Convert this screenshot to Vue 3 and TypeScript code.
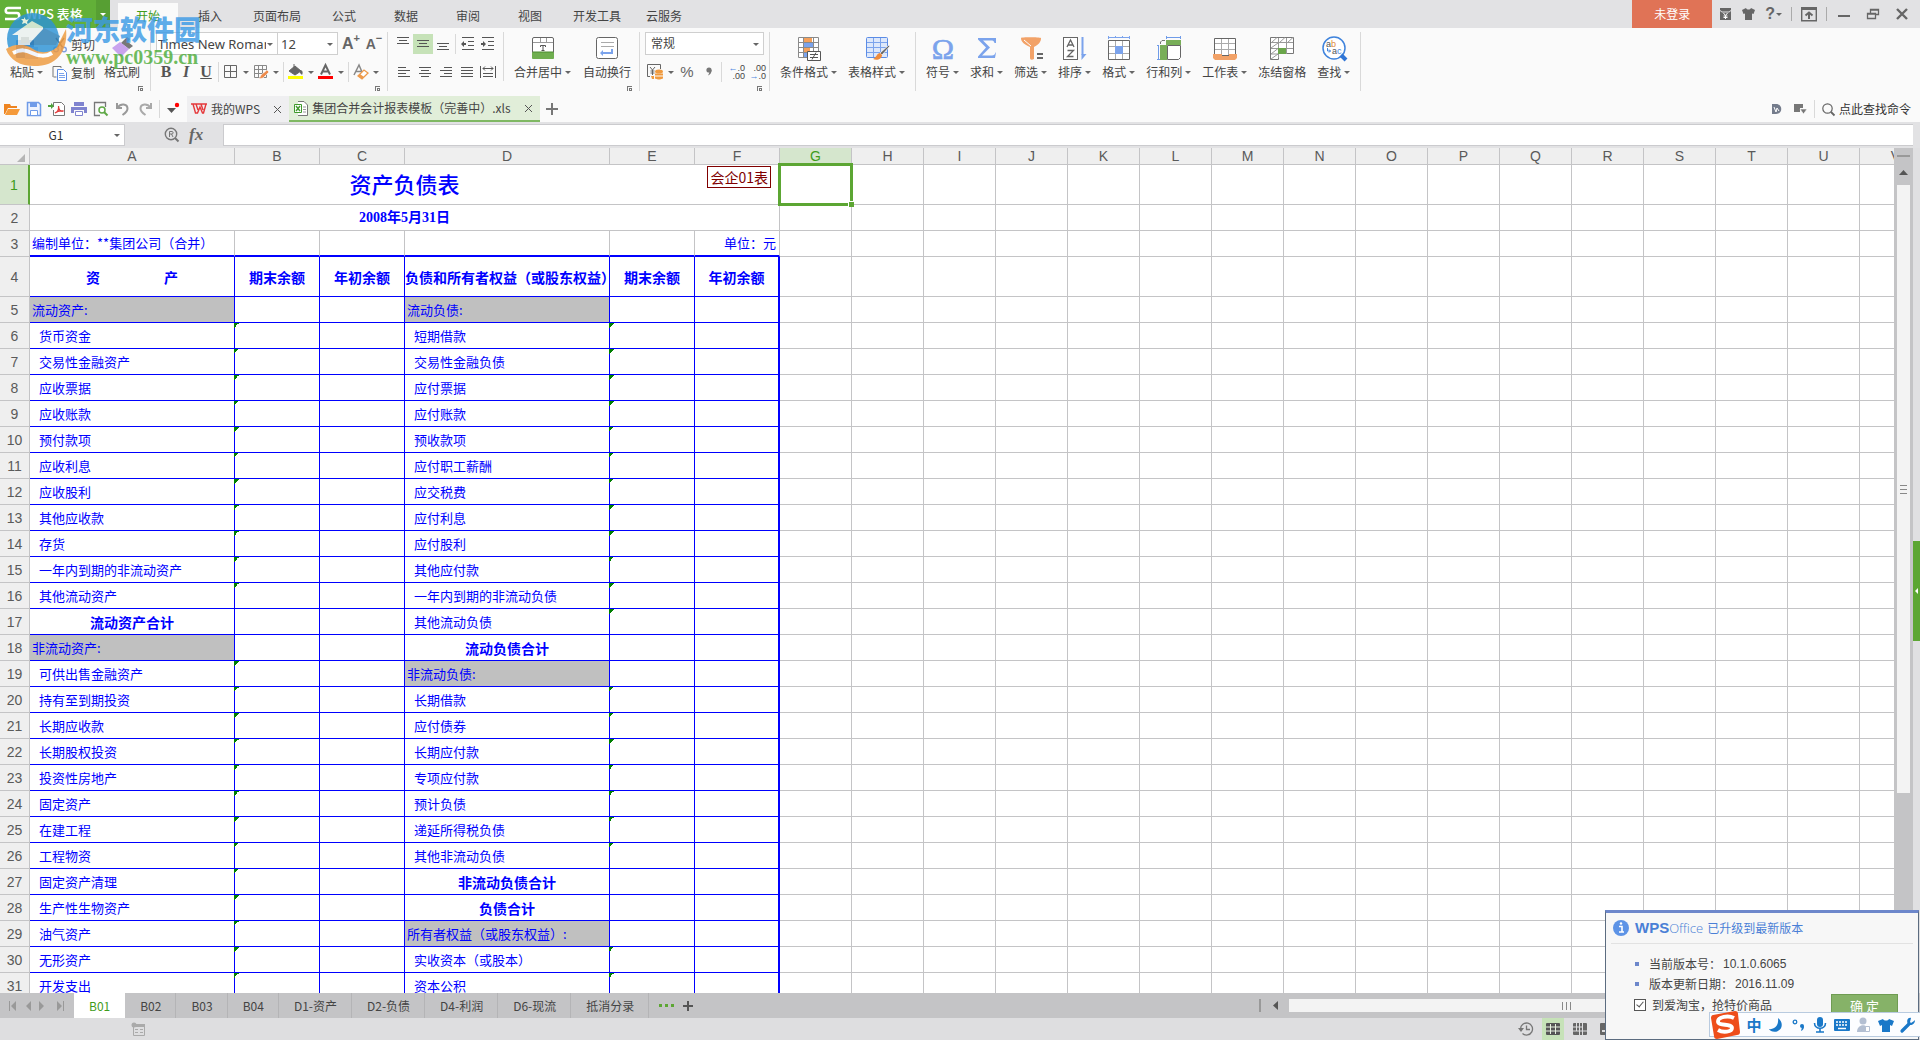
<script setup lang="ts">
import { ref } from 'vue'

interface BigTool { label: string; icon: string; caret: boolean }
interface Row { n: number; a: string; d: string; aKind: string; dKind: string; flagB: boolean; flagE: boolean }

const menus: string[] = ['插入', '页面布局', '公式', '数据', '审阅', '视图', '开发工具', '云服务']
const fontName = ref('Times New Roman')
const fontSize = ref('12')
const numberFormat = ref('常规')
const cellName = ref('G1')
const formula = ref('')
const openTaobao = ref(true)

const art: Record<string, string> = {
  merge: '<rect x="1.5" y="1.5" width="21" height="21" rx="1.5" fill="#fff" stroke="#666"/><path d="M2 6.500h20M9.500 2v4M15.500 2v4" stroke="#999"/><rect x="1" y="16" width="22" height="7" rx="1" fill="#6fae4f"/><path d="M2 16h20" stroke="#4c8c30"/><path d="M9.500 11V9.500h5V11M12 9.500v5M10.500 14.500h3" stroke="#555" fill="none"/>',
  wrap: '<rect x="1.500" y="1.500" width="21" height="21" rx="2" fill="#fff" stroke="#666"/><path d="M6 6.500h13M6 10.500h13" stroke="#aaa"/><path d="M16 13h2v5H8v2l-3-3 3-3v2h8z" fill="#7ba3ec"/>',
  cond: '<path d="M1.500 1.500h20v20h-20zM6.500 1.500v20M16.500 1.500v20M1.500 6.500h20M1.500 11.500h20M1.500 16.500h20" fill="#fff" stroke="#8a8a8a"/><path d="M7 2h8v4H7zM7 12h6v4H7z" fill="#f5a05a"/><path d="M7 7h9v4H7zM7 17h3v4H7z" fill="#7ba3ec"/><path d="M10.500 15.500h13v9h-13z" fill="#fff" stroke="#555"/><path d="M13 18.500h8M13 21.500h8M19 16.500l-4 7" stroke="#555"/>',
  style: '<rect x="1.500" y="1.500" width="21" height="20" rx="1" fill="#dde8fb" stroke="#5b8ce6"/><path d="M2 6.500h20M2 11.500h20M2 16.500h20M8.500 2v19M15.500 2v19" stroke="#7ba3ec"/><path d="M24 9l-9 8 2 2 8-9z" fill="#666" stroke="#fff" stroke-width=".7"/><path d="M15 17c-3 0-3 4-7 6 4 2 9 0 9-4z" fill="#ef8b3a"/>',
  omega: '<text x="12" y="23" text-anchor="middle" font-family="Liberation Serif" font-size="30" fill="#7ba3ec" stroke="#7ba3ec" stroke-width=".6">Ω</text>',
  sigma: '<path d="M3 2h18v5h-1.500c-.5-2-1.500-2.500-3.500-2.500H8l7 7-8 8h10c2 0 3-1 3.500-3H21l-1 5.500H3v-1.500l8-9-8-8z" fill="#7ba3ec"/>',
  filter: '<path d="M2 2c0-1 18-1 20 0 0 4-2 6-7 9v12c-2 1-4 1-4-1V11C5 8 2 6 2 2z" fill="#f2a268"/><path d="M5 4l7 6" stroke="#fff"/><path d="M18 18h6M18 22h6" stroke="#666" stroke-width="2"/>',
  sort: '<rect x=".5" y="1.500" width="14" height="22" fill="#fff" stroke="#666"/><path d="M4 11l3.500-7 3.500 7M5 9h5M4.500 14.500h6l-6 6h6" fill="none" stroke="#666" stroke-width="1.300"/><path d="M18.500 1v17h5l-5 6z" fill="#7ba3ec"/><path d="M19.500 1v18" stroke="#7ba3ec" stroke-width="2"/>',
  format: '<path d="M1.500 0v3M1.500 1.500h21M22.500 0v3M8.500 0v2M15.500 0v2" stroke="#7ba3ec"/><path d="M1.500 4.500h21v19h-21z" fill="#fff" stroke="#666"/><path d="M8.500 5v18M15.500 5v18M2 10.500h20M2 17.500h20" stroke="#aaa"/><path d="M8 10h8v8H8z" fill="#7ba3ec"/>',
  rowcol: '<path d="M9.500 0v3M9.500 1.500h14M23.500 0v3M0 9.500h2M1.500 9.500v14M0 23.500h3" stroke="#6f9be8"/><path d="M9 4h15v5H9zM3 9h7v15H3z" fill="#78ae58"/><path d="M3.500 8V6L5 4.500h3" stroke="#777" fill="none"/><path d="M10.500 9.500h13v12l-2 2h-11z" fill="#fff" stroke="#666"/>',
  sheet: '<path d="M1.500 2.500h21v17h-21z" fill="#fff" stroke="#666"/><path d="M8.500 3v16M15.500 3v16M2 7.500h20M2 13.500h20" stroke="#aaa"/><path d="M0 18h9v2h7v-2h8v4l-2 2H2l-2-2z" fill="#f2a268"/>',
  freeze: '<path d="M.5 1.500h23v16h-15v6h-8z" fill="#fff" stroke="#777"/><path d="M1 6.500h22M1 12.500h22M1 18h8M8.500 2v20M16.500 2v16M1 7l6-5.500M9 7l6-5.500M17 7l6-5.500M1 12l7-5M1 18l7-5.500M1 23l7-5" stroke="#999"/><path d="M8 12h8v6H8z" fill="#6aa64a"/>',
  find: '<circle cx="12" cy="12" r="11" fill="#fff" stroke="#3f83dc" stroke-width="1.500"/><path d="M19 19l5 5" stroke="#2f75d6" stroke-width="4"/><text x="4" y="11" font-family="Liberation Sans" font-size="9" fill="#555">a<tspan fill="#e08a3c">b</tspan></text><text x="10" y="18" font-family="Liberation Sans" font-size="9" fill="#555">a<tspan fill="#3f83dc">c</tspan></text><path d="M5.500 12v3h3M7 13.500l1.500 1.500L7 16.500" stroke="#3f83dc" fill="none"/>',
}

const styleTools: BigTool[] = [
  { label: '条件格式', icon: 'cond', caret: true },
  { label: '表格样式', icon: 'style', caret: true },
]
const mergeTools: BigTool[] = [
  { label: '合并居中', icon: 'merge', caret: true },
  { label: '自动换行', icon: 'wrap', caret: false },
]
const editTools: BigTool[] = [
  { label: '符号', icon: 'omega', caret: true },
  { label: '求和', icon: 'sigma', caret: true },
  { label: '筛选', icon: 'filter', caret: true },
  { label: '排序', icon: 'sort', caret: true },
  { label: '格式', icon: 'format', caret: true },
  { label: '行和列', icon: 'rowcol', caret: true },
  { label: '工作表', icon: 'sheet', caret: true },
  { label: '冻结窗格', icon: 'freeze', caret: false },
  { label: '查找', icon: 'find', caret: true },
]

const alignTop: { name: string; d: string; on?: boolean }[] = [
  { name: '顶端对齐', d: 'M2 1.500h12M4 4.500h8M2 7.500h12' },
  { name: '垂直居中', d: 'M2 4.500h12M4 7.500h8M2 10.500h12', on: true },
  { name: '底端对齐', d: 'M2 7.500h12M4 10.500h8M2 13.500h12' },
]
const indents: { name: string; d: string; arrow: string }[] = [
  { name: '减少缩进量', d: 'M2 1.500h12M8 5.500h6M8 9.500h6M2 13.500h12', arrow: 'M1 8l3-3v2h2v2H4v2z' },
  { name: '增加缩进量', d: 'M2 1.500h12M8 5.500h6M8 9.500h6M2 13.500h12', arrow: 'M6 8L3 5v2H1v2h2v2z' },
]
const alignBottom: { name: string; d: string }[] = [
  { name: '左对齐', d: 'M2 3.500h8M2 6.500h12M2 9.500h8M2 12.500h12' },
  { name: '水平居中', d: 'M2 3.500h12M4 6.500h8M2 9.500h12M4 12.500h8' },
  { name: '右对齐', d: 'M6 3.500h8M2 6.500h12M6 9.500h8M2 12.500h12' },
  { name: '两端对齐', d: 'M2 3.500h12M2 6.500h12M2 9.500h12M2 12.500h12' },
  { name: '分散对齐', d: 'M.5 2v12M15.500 2v12M3 9.500h10M3 12.500h10M3 4.500h10M5 2.500l-2 2 2 2M11 2.500l2 2-2 2' },
]

const blankCols: string[] = 'HIJKLMNOPQRSTUV'.split('')
const assets: string[] = [
  '流动资产:', '货币资金', '交易性金融资产', '应收票据', '应收账款', '预付款项', '应收利息', '应收股利', '其他应收款', '存货',
  '一年内到期的非流动资产', '其他流动资产', '流动资产合计', '非流动资产:', '可供出售金融资产', '持有至到期投资', '长期应收款',
  '长期股权投资', '投资性房地产', '固定资产', '在建工程', '工程物资', '固定资产清理', '生产性生物资产', '油气资产', '无形资产', '开发支出',
]
const debts: string[] = [
  '流动负债:', '短期借款', '交易性金融负债', '应付票据', '应付账款', '预收款项', '应付职工薪酬', '应交税费', '应付利息', '应付股利',
  '其他应付款', '一年内到期的非流动负债', '其他流动负债', '流动负债合计', '非流动负债:', '长期借款', '应付债券', '长期应付款',
  '专项应付款', '预计负债', '递延所得税负债', '其他非流动负债', '非流动负债合计', '负债合计', '所有者权益（或股东权益）:', '实收资本（或股本）', '资本公积',
]
function kind(text: string): string {
  if (text.endsWith(':')) return 'section'
  return text.endsWith('合计') ? 'total' : 'item'
}
const rows: Row[] = assets.map((a, i) => ({
  n: i + 5,
  a,
  d: debts[i],
  aKind: kind(a),
  dKind: kind(debts[i]),
  flagB: kind(a) === 'item',
  flagE: kind(debts[i]) === 'item',
}))

const sheets: string[] = ['B01', 'B02', 'B03', 'B04', 'D1-资产', 'D2-负债', 'D4-利润', 'D6-现流', '抵消分录']
</script>

<template>
  <div class="app">
    <header class="titlebar">
      <button class="brand" type="button">
        <svg width="18" height="16" viewBox="0 0 18 16"><path d="M17 2H4C1 2 1 7 4 7h9c3 0 3 6 0 6H1" fill="none" stroke="#fff" stroke-width="2.600" /></svg>
        <span>WPS 表格</span>
        <i class="caret light"></i>
      </button>
      <nav class="menus">
        <button class="menu active" type="button">开始</button>
        <button v-for="m in menus" :key="m" class="menu" type="button">{{ m }}</button>
      </nav>
      <button class="login" type="button">未登录</button>
      <div class="window-tools">
        <button type="button" aria-label="红包"><svg width="14" height="14" viewBox="0 0 14 14"><path d="M1 1h11v2l-2 1.500H3L1 3zM1 4l2 1.500h7L12 4v9H1z" fill="#666" /><path d="M4.500 6l2 2.500L8.500 6M6.500 8.500V12M4.500 9h4M4.500 10.500h4" stroke="#fff" fill="none" /></svg></button>
        <button type="button" aria-label="皮肤"><svg width="14" height="14" viewBox="0 0 14 14"><path d="M4 1c1 2 4 2 5 0l4 2-1.500 4L10 6.500V13H3V6.500L1.500 7 0 3z" fill="#666" /></svg></button>
        <button class="help" type="button" aria-label="帮助"><b>?</b><i class="caret"></i></button>
        <span class="bar"></span>
        <button class="wide" type="button" aria-label="隐藏功能区"><svg width="16" height="16" viewBox="0 0 16 16"><path d="M.7 1.700h14.600v13H.7z" fill="none" stroke="#666" stroke-width="1.400" /><path d="M0 1h16v3H0z" fill="#666" /><path d="M8 13V7M4.500 9.500L8 6.500l3.500 3" fill="none" stroke="#666" stroke-width="2" /></svg></button>
        <span class="bar"></span>
        <button class="wide" type="button" aria-label="最小化"><svg width="14" height="14" viewBox="0 0 14 14"><path d="M1 9h12" stroke="#666" stroke-width="2" /></svg></button>
        <button class="wide" type="button" aria-label="还原"><svg width="14" height="14" viewBox="0 0 14 14"><path d="M1.500 6.500h8v5h-8zM4.500 6V2.500h8v5H10M1.500 7h8M4.500 3h8" fill="none" stroke="#666" stroke-width="1.300" /></svg></button>
        <button class="wide" type="button" aria-label="关闭"><svg width="14" height="14" viewBox="0 0 14 14"><path d="M2 2l10 10M12 2L2 12" stroke="#666" stroke-width="2.400" /></svg></button>
      </div>
    </header>

    <section class="ribbon">
      <div class="group clipboard">
        <button class="big" type="button">
          <svg width="26" height="24" viewBox="0 0 26 24"><rect x="2" y="4" width="18" height="18" rx="1" fill="#6b8ecb" /><path d="M7 1h8v6H7z" fill="#888" /><path d="M11 11h13v12H11z" fill="#b8c6ea" /></svg>
          <span class="label">粘贴<i class="caret"></i></span>
        </button>
        <div class="stack">
          <button class="small" type="button"><svg width="16" height="16" viewBox="0 0 16 16"><path d="M4 1l7 10M12 1L5 11" stroke="#777" stroke-width="1.500" /><circle cx="4" cy="12.500" r="2.300" fill="none" stroke="#7f9fdf" stroke-width="1.400" /><circle cx="12" cy="12.500" r="2.300" fill="none" stroke="#7f9fdf" stroke-width="1.400" /></svg>剪切</button>
          <button class="small" type="button"><svg width="16" height="16" viewBox="0 0 16 16"><path d="M1 12V1.500h8V3M1.500 12h3" fill="none" stroke="#777" /><path d="M5.500 4.500h6l3 3v8h-9z" fill="#fff" stroke="#5b8ce6" /><path d="M7 8.500h5M7 10.500h6M7 12.500h6" stroke="#7ba3ec" /></svg>复制</button>
        </div>
        <button class="big" type="button">
          <svg width="24" height="24" viewBox="0 0 24 24"><path d="M17 1l-6 6 8 6 4-3-5-4 2-3z" fill="#777" /><path d="M10 6L2 12l9 9 8-8z" fill="#c9a3ee" /></svg>
          <span class="label">格式刷</span>
        </button>
        <i class="launcher"></i>
      </div>

      <div class="group font">
        <div class="line pickers">
          <label class="pick family"><select v-model="fontName" aria-label="字体"><option>Times New Roman</option></select><i class="caret"></i></label>
          <label class="pick size"><select v-model="fontSize" aria-label="字号"><option>12</option></select><i class="caret"></i></label>
          <button class="grow" type="button" aria-label="增大字号">A<sup>+</sup></button>
          <button class="grow minor" type="button" aria-label="减小字号">A<sup>−</sup></button>
        </div>
        <div class="line">
          <button class="tool bold" type="button">B</button>
          <button class="tool italic" type="button">I</button>
          <button class="tool under" type="button">U</button>
          <span class="split"></span>
          <button class="tool drop" type="button" aria-label="边框"><svg width="16" height="16" viewBox="0 0 16 16"><path d="M1.500 1.500h12v12h-12zM7.500 2v11M2 7.500h11" fill="none" stroke="#666" /></svg><i class="caret"></i></button>
          <button class="tool drop" type="button" aria-label="绘制边框"><svg width="16" height="16" viewBox="0 0 16 16"><path d="M1.500 1.500h12v12h-12zM5.500 2v11M9.500 2v11M2 5.500h11M2 9.500h11" fill="none" stroke="#888" /><path d="M6 15l2-4 6-5 2 2-6 6z" fill="#ee8a4a" stroke="#fff" stroke-width=".6" /></svg><i class="caret"></i></button>
          <span class="split"></span>
          <button class="tool drop" type="button" aria-label="填充颜色"><svg width="16" height="16" viewBox="0 0 16 16"><path d="M1 7l6-5 6 5-6 4zM6 0v4" fill="#666" stroke="#666" /><path d="M12 6c3 0 3 3 2 5l-2-2z" fill="#666" /><path d="M0 12h15v3H0z" fill="#ff0" /></svg><i class="caret"></i></button>
          <button class="tool drop" type="button" aria-label="字体颜色"><svg width="16" height="16" viewBox="0 0 16 16"><path d="M3 10.500L7.500 1 12 10.500M4.500 7.500h6" fill="none" stroke="#666" stroke-width="2" /><path d="M0 12h15v3H0z" fill="red" /></svg><i class="caret"></i></button>
          <span class="split"></span>
          <button class="tool drop" type="button" aria-label="清除"><svg width="16" height="16" viewBox="0 0 16 16"><path d="M1 11L6 1l3 7M3 7.500h5" fill="none" stroke="#888" stroke-width="1.500" /><path d="M5 12l6-6 4 3-6 6z" fill="#fff" stroke="#ee9a4a" stroke-width="1.300" /><path d="M5 12l2-2 4 3-2 2z" fill="#ee9a4a" /></svg><i class="caret"></i></button>
        </div>
        <i class="launcher"></i>
      </div>

      <div class="group align">
        <div class="line first">
          <button v-for="a in alignTop" :key="a.name" class="tool" :class="{ on: a.on }" type="button" :aria-label="a.name"><svg width="16" height="16" viewBox="0 0 16 16"><path :d="a.d" stroke="#555" /></svg></button>
          <span class="split"></span>
          <button v-for="a in indents" :key="a.name" class="tool" type="button" :aria-label="a.name"><svg width="16" height="16" viewBox="0 0 16 16"><path :d="a.d" stroke="#555" /><path :d="a.arrow" fill="#555" /></svg></button>
        </div>
        <div class="line">
          <button v-for="a in alignBottom" :key="a.name" class="tool mid" type="button" :aria-label="a.name"><svg width="16" height="16" viewBox="0 0 16 16"><path :d="a.d" fill="none" stroke="#555" /></svg></button>
        </div>
      </div>

      <div class="group bigs merge">
        <button v-for="t in mergeTools" :key="t.label" class="big" type="button">
          <svg width="24" height="24" viewBox="0 0 24 24" v-html="art[t.icon]"></svg>
          <span class="label">{{ t.label }}<i v-if="t.caret" class="caret"></i></span>
        </button>
        <i class="launcher"></i>
      </div>

      <div class="group number">
        <div class="line pickers">
          <label class="pick format"><select v-model="numberFormat" aria-label="数字格式"><option>常规</option></select><i class="caret"></i></label>
        </div>
        <div class="line">
          <button class="tool drop" type="button" aria-label="货币"><svg width="18" height="16" viewBox="0 0 18 16"><path d="M4 12.500H1.500v-12h13V5" fill="none" stroke="#666" /><path d="M4 3l2.500 3L9 3M6.500 6v5M4.500 7h4M4.500 9h4" fill="none" stroke="#666" /><ellipse cx="13" cy="7.500" rx="4" ry="2" fill="#f09a3e" /><path d="M9 9.500h8v2H9zM9 12.500h8v2l-3 1h-2l-3-1zM5 12h3v3H6z" fill="#f09a3e" /></svg><i class="caret"></i></button>
          <button class="tool percent" type="button">%</button>
          <button class="tool" type="button" aria-label="千位分隔"><svg width="8" height="12" viewBox="0 0 8 12"><circle cx="4" cy="4" r="2.600" fill="#777" /><path d="M6.600 4c0 3-1.600 5-3.600 5.500 1-1.500 1.500-3 1.400-5z" fill="#777" /></svg></button>
          <span class="split"></span>
          <button class="tool decimals mid" type="button" aria-label="增加小数位"><span><b>←</b>.0</span><span>.00</span></button>
          <button class="tool decimals mid" type="button" aria-label="减少小数位"><span>.00</span><span><b>→</b>.0</span></button>
        </div>
        <i class="launcher"></i>
      </div>

      <div class="group bigs">
        <button v-for="t in styleTools" :key="t.label" class="big" type="button">
          <svg width="24" height="24" viewBox="0 0 24 24" v-html="art[t.icon]"></svg>
          <span class="label">{{ t.label }}<i v-if="t.caret" class="caret"></i></span>
        </button>
      </div>
      <div class="group bigs">
        <button v-for="t in editTools" :key="t.label" class="big" type="button">
          <svg width="24" height="24" viewBox="0 0 24 24" v-html="art[t.icon]"></svg>
          <span class="label">{{ t.label }}<i v-if="t.caret" class="caret"></i></span>
        </button>
      </div>
    </section>

    <section class="quick">
      <div class="quick-icons">
        <button type="button" aria-label="打开"><svg width="16" height="16" viewBox="0 0 16 16"><path d="M0 3h6l1 2h6v2H4l-3 6H0z" fill="#ee8420" /><path d="M4 8h12l-3 6H1z" fill="#f59a3a" /></svg></button>
        <button type="button" aria-label="保存"><svg width="16" height="16" viewBox="0 0 16 16"><path d="M1.500 1.500h11l2 2v11h-13z" fill="#eef3fe" stroke="#6f9be8" stroke-width="1.500" /><path d="M4 2h7v4H4z" fill="#6f9be8" /><path d="M4.500 9.500h7v5h-7z" fill="#fff" stroke="#6f9be8" /></svg></button>
        <button type="button" aria-label="输出为PDF"><svg width="17" height="16" viewBox="0 0 17 16"><path d="M5.500 6V1.500h8l3 3v10h-11V9" fill="#fff" stroke="#777" /><path d="M0 4h3V2l3 3-3 3V6H0z" fill="#4fa23c" /><path d="M7 12c3-1 4-4 3.500-7 0 4 2 6 5 5-3-.5-6 0-8.500 2z" fill="none" stroke="#e23b3b" stroke-width="1.300" /></svg></button>
        <button type="button" aria-label="打印"><svg width="16" height="16" viewBox="0 0 16 16"><path d="M3 1h10v4H3zM0 6h16v6h-3V9H3v3H0z" fill="#7f83cf" /><path d="M4.500 10.500h7v4h-7z" fill="#fff" stroke="#7f83cf" /></svg></button>
        <button type="button" aria-label="打印预览"><svg width="16" height="16" viewBox="0 0 16 16"><path d="M12.500 6V1.500h-11v13H7" fill="none" stroke="#777" stroke-width="1.300" /><circle cx="9" cy="9" r="3" fill="#fff" stroke="#5fa846" stroke-width="1.500" /><path d="M11 11l3.500 3.500" stroke="#5fa846" stroke-width="2" /></svg></button>
        <button type="button" aria-label="撤销"><svg width="16" height="16" viewBox="0 0 16 16"><path d="M2 2v5h5M2.500 6.500C6 2 12 3 12.500 7c.3 3-2 5-5 7" fill="none" stroke="#999" stroke-width="2" /></svg></button>
        <button type="button" aria-label="恢复"><svg width="16" height="16" viewBox="0 0 16 16"><path d="M14 2v5H9M13.500 6.500C10 2 4 3 3.500 7c-.3 3 2 5 5 7" fill="none" stroke="#aaa" stroke-width="2" /></svg></button>
        <span class="split tall"></span>
        <button class="more" type="button" aria-label="更多"><svg width="14" height="16" viewBox="0 0 14 16"><path d="M1 7h9l-4.500 5z" fill="#555" /><circle cx="11" cy="4" r="2.200" fill="#f00" /></svg></button>
      </div>
      <div class="doc-tabs">
        <div class="doc">
          <svg width="16" height="14" viewBox="0 0 16 14"><path d="M0 2h9M7 2h9M2 2l2.500 9h2L9 5l2.500 6h1L15 2M5 2l2 6M10 2l2 6" fill="none" stroke="#e5383b" stroke-width="1.400" /></svg>
          <span>我的WPS</span>
          <button type="button" aria-label="关闭"><svg width="9" height="9" viewBox="0 0 9 9"><path d="M1 1l7 7M8 1L1 8" stroke="#555" /></svg></button>
        </div>
        <div class="doc current">
          <svg width="14" height="15" viewBox="0 0 14 15"><path d="M4 .5h6l3.500 3.500v10.500H4" fill="#fff" stroke="#777" /><path d="M9 6h3M9 8.500h3M9 11h3" stroke="#999" /><path d="M.5 3.500h7v8h-7z" fill="#fff" stroke="#3f9a2c" /><path d="M2 5l4 5M6 5l-4 5" stroke="#3f9a2c" stroke-width="1.400" /></svg>
          <span>集团合并会计报表模板（完善中）.xls</span>
          <button type="button" aria-label="关闭"><svg width="9" height="9" viewBox="0 0 9 9"><path d="M1 1l7 7M8 1L1 8" stroke="#555" /></svg></button>
        </div>
        <button class="plus" type="button" aria-label="新建"><svg width="12" height="12" viewBox="0 0 12 12"><path d="M6 0v12M0 6h12" stroke="#777" stroke-width="2" /></svg></button>
      </div>
      <div class="search">
        <svg width="10" height="12" viewBox="0 0 10 12"><path d="M0 1h4c7 0 7 10 0 10H0z" fill="#747c8c" /><path d="M2 4l2 5 1-4 2 3" stroke="#fff" fill="none" /></svg>
        <svg width="13" height="12" viewBox="0 0 13 12"><path d="M0 1h9v4H6v4H0z" fill="#777" /><path d="M6 6h7l-3.500 5z" fill="#777" stroke="#fafafa" stroke-width=".6" /></svg>
        <span class="split tall"></span>
        <svg width="13" height="13" viewBox="0 0 13 13"><circle cx="5.500" cy="5.500" r="4.700" fill="none" stroke="#666" stroke-width="1.200" /><path d="M9 9l3.500 3.500" stroke="#666" stroke-width="1.800" /></svg>
        <a href="#">点此查找命令</a>
      </div>
    </section>

    <section class="formula">
      <label class="name-box"><input v-model="cellName" aria-label="名称框" /><i class="caret"></i></label>
      <div class="fx">
        <svg width="16" height="16" viewBox="0 0 16 16"><circle cx="7" cy="7" r="5.700" fill="none" stroke="#777" stroke-width="1.400" /><path d="M5.500 10V4.500H8c1.500 0 1.500 2.500 0 2.500H5.500M7.500 7L9 10" fill="none" stroke="#777" /><path d="M11 11l3.500 3.500" stroke="#777" stroke-width="2" /></svg>
        <em>fx</em>
      </div>
      <input v-model="formula" class="formula-input" aria-label="编辑栏" />
    </section>

    <main class="work">
      <div class="sheet">
        <table>
          <colgroup>
            <col class="c-head" /><col class="c-wide" /><col class="c-mid" /><col class="c-mid" /><col class="c-wide" /><col class="c-mid" /><col class="c-mid" />
            <col class="c-std" /><col v-for="c in blankCols" :key="c" class="c-std" />
          </colgroup>
          <thead>
            <tr>
              <th class="corner"><svg width="8" height="8" viewBox="0 0 8 8"><path d="M8 0v8H0z" fill="#b5b5b5" /></svg></th>
              <th>A</th><th>B</th><th>C</th><th>D</th><th>E</th><th>F</th><th class="picked">G</th>
              <th v-for="c in blankCols" :key="c">{{ c }}</th>
            </tr>
          </thead>
          <tbody>
            <tr class="tall">
              <th class="picked">1</th>
              <td colspan="6" class="title">资产负债表<span class="stamp">会企01表</span></td>
              <td><span class="selection"></span></td>
              <td v-for="c in blankCols" :key="c"></td>
            </tr>
            <tr>
              <th>2</th>
              <td colspan="6" class="date">2008年5月31日</td>
              <td></td><td v-for="c in blankCols" :key="c"></td>
            </tr>
            <tr class="above">
              <th>3</th>
              <td class="section">编制单位：**集团公司（合并）</td>
              <td></td><td></td><td></td><td></td>
              <td class="unit">单位：元</td>
              <td></td><td v-for="c in blankCols" :key="c"></td>
            </tr>
            <tr class="tall ruled">
              <th>4</th>
              <td class="total spread">资<span></span>产</td>
              <td class="total">期末余额</td><td class="total">年初余额</td>
              <td class="total">负债和所有者权益（或股东权益）</td>
              <td class="total">期末余额</td><td class="total">年初余额</td>
              <td></td><td v-for="c in blankCols" :key="c"></td>
            </tr>
            <tr v-for="r in rows" :key="r.n" class="ruled">
              <th>{{ r.n }}</th>
              <td :class="[r.aKind, { grey: r.aKind === 'section' }]">{{ r.a }}</td>
              <td :class="{ flag: r.flagB }"></td><td></td>
              <td :class="[r.dKind, { grey: r.dKind === 'section' }]">{{ r.d }}</td>
              <td :class="{ flag: r.flagE }"></td><td></td>
              <td></td><td v-for="c in blankCols" :key="c"></td>
            </tr>
          </tbody>
        </table>
      </div>
      <div class="vscroll">
        <i class="dash"></i>
        <svg width="9" height="5" viewBox="0 0 9 5"><path d="M0 5L4.500 0 9 5z" fill="#555" /></svg>
        <div class="thumb"><i></i><i></i><i></i></div>
      </div>
      <aside class="edge"><button type="button" aria-label="展开任务窗格"><svg width="3" height="6" viewBox="0 0 3 6"><path d="M3 0v6L0 3z" fill="#fff" /></svg></button></aside>
    </main>

    <section class="tabs">
      <div class="nav">
        <svg width="56" height="10" viewBox="0 0 56 10"><path d="M0 0h1v10H0zM7 0L2 5l5 5zM22 0l-5 5 5 5zM30 0l5 5-5 5zM54 0h1v10h-1zM48 0l5 5-5 5z" fill="#999" /></svg>
      </div>
      <button v-for="(s, i) in sheets" :key="s" class="sheet-tab" :class="{ current: i === 0 }" type="button">{{ s }}</button>
      <button class="dots" type="button" aria-label="更多工作表"><i></i><i></i><i></i></button>
      <button class="add" type="button" aria-label="新建工作表"><svg width="10" height="10" viewBox="0 0 10 10"><path d="M5 0v10M0 5h10" stroke="#555" stroke-width="2" /></svg></button>
      <div class="hscroll">
        <i class="grip"></i>
        <svg width="5" height="9" viewBox="0 0 5 9"><path d="M5 0v9L0 4.500z" fill="#555" /></svg>
        <div class="thumb"><i></i><i></i><i></i></div>
      </div>
    </section>

    <footer class="status">
      <svg width="15" height="15" viewBox="0 0 15 15"><path d="M2.500 3.500h11v10h-11z" fill="none" stroke="#aaa" /><path d="M5 2h9v3H5zM4 7h3v1H4zM9 7h3v1H9zM4 10h3v1H4zM9 10h3v1H9z" fill="#aaa" /><circle cx="3" cy="3" r="2.500" fill="#aaa" /></svg>
      <div class="views">
        <svg width="15" height="14" viewBox="0 0 15 14"><path d="M2.500 7a6 6 0 1 1 2 4.500M8.500 3.500V7.500h3.500" fill="none" stroke="#777" stroke-width="1.300" /><path d="M0 6h6L3 10z" fill="#777" /></svg>
        <button class="on" type="button" aria-label="普通视图"><svg width="14" height="12" viewBox="0 0 14 12"><rect width="14" height="12" rx="1" fill="#555" /><path d="M0 4h14M0 8h14M4.500 1v10M9.500 1v10" stroke="#e8f2e0" /></svg></button>
        <button type="button" aria-label="分页预览"><svg width="14" height="12" viewBox="0 0 14 12"><rect width="14" height="12" rx="1" fill="#666" /><path d="M0 4h10M0 8h14M3.500 0v8M6.500 0v12M9.500 0v12" stroke="#dedee0" /></svg></button>
        <button type="button" aria-label="阅读视图"><svg width="14" height="12" viewBox="0 0 14 12"><rect width="14" height="12" rx="1" fill="#666" /><path d="M2 8h10" stroke="#dedee0" stroke-width="2" /></svg></button>
      </div>
    </footer>

    <div class="watermark">
      <svg width="62" height="54" viewBox="0 0 62 54">
        <circle cx="29" cy="26" r="26" fill="#2d93d6" />
        <path d="M2 36c8-5 18-6 27 0 8 5 18 4 24-2l9-18c2 18-6 36-28 37C18 54 6 48 2 36z" fill="#ef9a3e" />
        <path d="M8 22L28 8l11 6v18H14V22z" fill="#e9f1ee" />
        <path d="M26 30l14-15 16 8-4 9H26z" fill="#2a7fb8" />
        <path d="M20 4l2 3 3-1-2 3 1 3-3-2-3 1 1-3-2-2 3 0z" fill="#fff" />
        <path d="M9 40c8-4 13-3 19 0s14 4 20 0" fill="none" stroke="#fff" stroke-width="4" />
      </svg>
      <div class="wm-text"><strong>河东软件园</strong><span>www.pc0359.cn</span></div>
    </div>

    <section class="popup">
      <h2>
        <svg width="18" height="18" viewBox="0 0 18 18"><circle cx="9" cy="9" r="8" fill="#5d93e6" /><path d="M7 7.500h3v5M7 13h5" fill="none" stroke="#fff" stroke-width="1.600" /><circle cx="9" cy="4.500" r="1.200" fill="#fff" /></svg>
        <b>WPS</b><i>Office</i><span>已升级到最新版本</span>
      </h2>
      <ul>
        <li>当前版本号：<span>10.1.0.6065</span></li>
        <li>版本更新日期：<span>2016.11.09</span></li>
      </ul>
      <div class="confirm">
        <label><input v-model="openTaobao" type="checkbox" />到爱淘宝，抢特价商品</label>
        <button type="button">确 定</button>
      </div>
    </section>

    <div class="ime">
      <svg width="30" height="28" viewBox="0 0 30 28"><path d="M3 4l22-4c2 0 3 1 3 3l2 18c0 2-1 3-3 3L7 28c-2 0-3-1-3-3L1 7c0-2 1-3 2-3z" fill="#ee4d1a" /><path d="M24 7C18 4 8 6 8 10.500c0 5 14 1.500 14 6.500 0 4-9 5-14 2" fill="none" stroke="#fff" stroke-width="3.800" /></svg>
      <b>中</b>
      <svg width="16" height="16" viewBox="0 0 16 16"><path d="M10 1c5 4 5 10 0 13-4 2-8 0-9-2 6 1 10-4 9-11z" fill="#1a78c8" /></svg>
      <svg width="16" height="16" viewBox="0 0 16 16"><circle cx="5" cy="5" r="1.800" fill="none" stroke="#1a78c8" stroke-width="1.300" /><circle cx="12" cy="9" r="2" fill="#1a78c8" /><path d="M14 9c0 3-1 4-3 5l1-4z" fill="#1a78c8" /></svg>
      <svg width="16" height="16" viewBox="0 0 16 16"><rect x="5" y="0" width="6" height="10" rx="3" fill="#1a78c8" /><path d="M2.500 6c0 7 11 7 11 0M8 11v4M4 15h8" fill="none" stroke="#1a78c8" stroke-width="1.600" /></svg>
      <svg width="16" height="16" viewBox="0 0 16 16"><rect x="0" y="2" width="16" height="12" rx="1" fill="#1a78c8" /><path d="M2 5h12M2 8h12" stroke="#fff" stroke-width="1.600" stroke-dasharray="2 1" /><path d="M4 11.500h8" stroke="#fff" stroke-width="1.500" /></svg>
      <svg width="16" height="16" viewBox="0 0 16 16"><circle cx="7" cy="4" r="3.500" fill="#b3bfd2" /><path d="M1 15c0-9 12-9 12 0z" fill="#b3bfd2" /><path d="M9.500 9.500h4v5h-4z" fill="#fff" stroke="#b3bfd2" /></svg>
      <svg width="16" height="16" viewBox="0 0 16 16"><path d="M5 2c1 2 5 2 6 0l5 2-2 5-2-1v7H4V8L2 9 0 4z" fill="#1a78c8" /></svg>
      <svg width="16" height="16" viewBox="0 0 16 16"><path d="M2 14l7-7" stroke="#1a78c8" stroke-width="3.200" stroke-linecap="round" /><path d="M14 4l-3 2-1-1 1-4C8 0 6 4 8 7c2 2 7 1 7-4z" fill="#1a78c8" /></svg>
    </div>
  </div>
</template>

<style>
html, body { margin: 0; background: #e2e2e4; }
</style>

<style scoped>
.app {
  position: relative;
  display: flex;
  flex-direction: column;
  height: 100vh;
  overflow: hidden;
  color: #444;
  font: 12px/18px "Noto Sans CJK SC", sans-serif;
}
button { display: flex; align-items: center; justify-content: center; margin: 0; padding: 0; border: 0; background: none; color: inherit; font: inherit; white-space: nowrap; }
svg { display: block; flex: none; overflow: visible; }
input, select { box-sizing: border-box; margin: 0; border: 0; border-radius: 0; outline: 0; background: none; color: inherit; font: inherit; }
.caret { flex: none; width: 0; height: 0; border: 3px solid transparent; border-top: 3px solid #666; border-bottom: 0; }
.caret.light { border-top-color: #fff; }

.titlebar { display: flex; flex: none; height: 28px; background: #e2e2e4; }
.brand { box-sizing: border-box; width: 110px; justify-content: flex-start; gap: 4px; padding: 0 4px; background: linear-gradient(90deg, #62b038 96px, #579f33 96px); color: #fff; font-size: 13px; font-weight: 500; }
.brand .caret { margin-left: auto; }
.menus { display: flex; flex: 1; padding-left: 8px; }
.menu { min-width: 62px; padding: 4px 12px 0; }
.menu.active { min-width: 60px; height: 25px; margin: 3px 1px 0 0; padding-top: 0; background: #fafafa; color: #3f9c1c; }
.login { width: 80px; background: #e07356; color: #fff; }
.window-tools { display: flex; align-items: center; gap: 9px; padding: 0 10px 0 7px; }
.window-tools .bar { width: 1px; height: 14px; background: #aaa; }
.window-tools .wide { width: 16px; }
.window-tools .wide + .wide { margin-left: 4px; }
.help { gap: 1px; color: #666; font: 700 16px/18px "Liberation Sans", sans-serif; }

.ribbon { display: flex; flex: none; height: 68px; background: #fafafa; }
.group { position: relative; box-sizing: border-box; display: flex; flex-direction: column; height: 68px; padding-top: 4px; }
.group::after { content: ""; position: absolute; top: 4px; right: 0; bottom: 5px; width: 1px; background: #d9d9d9; }
.group.align::after { bottom: 15px; }
.clipboard { flex-direction: row; width: 151px; padding: 8px 0 0 10px; gap: 9px; }
.font { width: 237px; padding-left: 5px; }
.align { width: 116px; padding-left: 5px; }
.number { width: 130px; padding-left: 5px; }
.bigs { flex-direction: row; gap: 11px; padding: 8px 11px 0 10px; }
.merge { gap: 12px; padding-right: 9px; }
.big { flex-direction: column; gap: 3px; align-self: flex-start; }
.label { display: flex; align-items: center; gap: 3px; }
.stack { display: flex; flex-direction: column; gap: 10px; }
.small { gap: 3px; }
.launcher { position: absolute; right: 8px; bottom: 5px; box-sizing: border-box; width: 5px; height: 5px; border: solid #777; border-width: 1px 0 0 1px; }
.launcher::after { content: ""; position: absolute; right: 0; bottom: 0; box-sizing: border-box; width: 3px; height: 3px; border: 1px solid #777; }
.line { display: flex; align-items: center; height: 20px; margin-top: 7px; }
.line.pickers { height: 23px; margin-top: 0; }
.line.first { margin: 2px 0 1px; }
.pick { position: relative; box-sizing: border-box; height: 23px; border: 1px solid #cfcfcf; background: #fff; }
.pick select { appearance: none; width: 100%; height: 21px; padding: 0 14px 0 3px; font-family: "Noto Sans", "Noto Sans CJK SC", sans-serif; font-size: 13px; text-overflow: clip; }
.pick .caret { position: absolute; right: 4px; top: 10px; }
.family { width: 122px; }
.family select { padding: 0 11px 0 1px; }
.size { width: 61px; margin-left: -1px; }
.format { width: 119px; }
.format select { font-size: 12px; padding-left: 5px; }
.grow { width: 20px; margin-left: 3px; color: #666; font: 700 16px/20px "Liberation Sans", sans-serif; }
.grow sup { align-self: flex-start; font-size: 11px; line-height: 8px; }
.grow.minor { font-size: 14px; }
.tool { width: 20px; height: 20px; }
.tool.mid { width: 21px; }
.tool.on { background: #c6e2b8; }
.tool.drop { width: 30px; gap: 4px; }
.bold, .italic, .under { color: #555; font: 700 16px/20px "Liberation Serif", serif; }
.italic { font-style: italic; }
.under { text-decoration: underline; }
.percent { width: 24px; color: #666; font: 15px/20px "Liberation Sans", sans-serif; }
.decimals { flex-direction: column; align-items: flex-end; font: 9px/8px "Liberation Sans", sans-serif; }
.decimals b { color: #4f86e0; }
.split { flex: none; width: 1px; height: 20px; margin: 0 2px; background: #d9d9d9; }

.quick { display: flex; flex: none; height: 26px; background: #fafafa; }
.quick-icons { display: flex; align-items: center; gap: 6px; width: 183px; padding-left: 4px; }
.quick-icons .split { margin: 0; }
.doc-tabs { display: flex; flex: 1; }
.doc { box-sizing: border-box; display: flex; align-items: center; gap: 4px; height: 26px; padding: 0 7px 0 4px; background: #efeff1; }
.doc button { width: 9px; margin-left: 9px; }
.doc.current { border-bottom: 2px solid #7fb863; background: #e1eed9; padding-left: 5px; }
.plus { margin-left: 6px; }
.search { display: flex; align-items: center; gap: 12px; padding-right: 9px; }
.search .split { margin: 0 -5px; }
.search a { margin-left: -8px; color: #333; text-decoration: none; }
.split.tall { height: 18px; }

.formula { display: flex; flex: none; height: 26px; background: #e2e2e4; padding-right: 7px; }
.name-box, .formula-input { box-sizing: border-box; height: 22px; margin-top: 2px; border: 1px solid #cbcbce; background: #fff; }
.name-box { display: flex; align-items: center; width: 125px; border-left: 0; padding-right: 4px; color: #333; }
.name-box input { flex: 1; width: 0; padding-right: 4px; text-align: center; }
.fx { box-sizing: border-box; display: flex; align-items: center; gap: 9px; width: 98px; padding-left: 39px; color: #666; }
.fx em { font: italic 700 17px/20px "Liberation Serif", serif; }
.formula-input { flex: 1; width: 0; border-right: 0; }

.work { display: flex; flex: 1; min-height: 0; }
.sheet { flex: 1; min-width: 0; overflow: hidden; background: #fff; }
table { width: 1px; table-layout: fixed; border-collapse: separate; border-spacing: 0; }
.c-head { width: 30px; }
.c-wide { width: 205px; }
.c-mid { width: 85px; }
.c-std { width: 72px; }
th, td { position: relative; box-sizing: border-box; height: 26px; padding: 0; border: 0 solid #c4c4c6; border-width: 0 1px 1px 0; white-space: nowrap; }
th { background: #efefef; color: #5a5a5a; font: 14px/14px "Liberation Sans", sans-serif; }
thead th { height: 17px; }
.corner svg { margin: 3px 0 0 17px; }
thead .picked { border-bottom: 2px solid #5ca633; background: #d5e6cd; color: #3f9c1c; }
tbody .picked { border-right: 2px solid #5ca633; background: #d5e6cd; color: #3f9c1c; }
.tall > * { height: 40px; }
td { color: #00f; font-size: 13px; line-height: 16px; }
.title { padding-bottom: 3px; text-align: center; font-size: 22px; line-height: 28px; font-weight: 500; }
.date { text-align: center; font: 700 14px/18px "Liberation Serif", "Noto Sans CJK SC", serif; }
.unit { padding-right: 3px; text-align: right; }
.section { padding-left: 2px; }
.item { padding-left: 9px; }
.total { text-align: center; font-size: 14px; font-weight: 700; }
.spread span { display: inline-block; width: 64px; }
.grey { background: #c0c0c0; }
.above td:nth-child(-n + 7) { border-bottom: 2px solid #00f; }
.ruled td:nth-child(-n + 7) { border-color: #00f; }
.ruled td:nth-child(7) { border-right-width: 2px; }
.flag::before { content: ""; position: absolute; top: 0; left: -1px; width: 5px; height: 5px; background: linear-gradient(135deg, #008000 50%, transparent 50%); }
.stamp { position: absolute; top: 1px; right: 8px; padding: 0 2px; border: 1px solid #800000; background: #fff; color: #800000; font-size: 14px; font-weight: 400; line-height: 20px; }
.selection { position: absolute; z-index: 1; inset: -2px; border: 3px solid #5ca633; }
.selection::after { content: ""; position: absolute; right: -4px; bottom: -4px; width: 5px; height: 5px; border: 1px solid #fff; border-width: 1px 0 0 1px; background: #5ca633; }

.vscroll { display: flex; flex-direction: column; align-items: center; width: 19px; background: #c4c4c6; }
.dash { width: 13px; height: 2px; margin: 7px 0 13px; background: #999; }
.vscroll .thumb { display: flex; flex-direction: column; align-items: center; justify-content: center; gap: 3px; width: 13px; height: 72%; margin-top: 10px; background: #f3f3f3; }
.vscroll .thumb i { width: 7px; height: 1px; background: #888; }
.edge { width: 7px; display: flex; align-items: center; background: #e0e0e2; }
.edge button { width: 7px; height: 100px; margin-top: 41px; background: #5ca633; }

.tabs { display: flex; flex: none; height: 25px; background: #c4c4c6; }
.nav { box-sizing: border-box; display: flex; align-items: center; width: 74px; padding-left: 9px; }
.sheet-tab { padding: 0 14px 0 15px; border-right: 1px solid #b4b4b6; }
.sheet-tab.current { background: #fff; color: #3f9c1c; border-color: #fff; }
.dots { gap: 3px; margin-left: 10px; }
.dots i { width: 3px; height: 3px; background: #5ca633; }
.add { margin-left: 9px; }
.hscroll { display: flex; align-items: center; width: 661px; margin-left: auto; }
.grip { width: 2px; height: 13px; margin-right: 12px; background: #999; }
.hscroll .thumb { display: flex; flex: 1; align-items: center; justify-content: center; gap: 3px; height: 13px; margin: 0 76px 0 11px; background: #f3f3f3; }
.hscroll .thumb i { width: 1px; height: 8px; background: #888; }

.status { display: flex; flex: none; align-items: center; justify-content: space-between; height: 22px; padding-left: 131px; background: #dedee0; }
.views { display: flex; align-items: center; gap: 5px; width: 402px; }
.views svg + button { margin-left: 4px; }
.views button { width: 22px; height: 22px; }
.views .on { background: #c6e2b8; }

.watermark { position: absolute; top: 13px; left: 4px; display: flex; opacity: .82; pointer-events: none; }
.wm-text { display: flex; flex-direction: column; }
.wm-text strong { color: #3d9be6; font-size: 27px; line-height: 32px; font-weight: 900; }
.wm-text span { color: #4fae3c; font: 700 20px/24px "Liberation Serif", serif; }

.popup { position: absolute; right: 1px; bottom: 0; box-sizing: border-box; width: 314px; height: 130px; padding: 0 5px; border: 1px solid #5c6c80; border-top: 3px solid #6d87cb; background: #f7f7f7; color: #444; }
.popup h2 { display: flex; align-items: center; height: 30px; margin: 0; padding-left: 1px; border-bottom: 1px solid #e2e2e2; color: #4a7fd6; font-size: 12px; font-weight: 400; }
.popup h2 b { margin-left: 5px; font: 700 15px/20px "Liberation Sans", sans-serif; }
.popup h2 i { margin-right: 4px; font: 300 13px/20px "Open Sans", sans-serif; }
.popup ul { margin: 10px 0 0; padding: 0 0 0 24px; list-style: none; }
.popup li { display: flex; align-items: center; height: 20px; }
.popup li::before { content: ""; width: 4px; height: 4px; margin-right: 10px; background: #6d87cb; }
.popup li span { margin-left: 2px; font-family: "Liberation Sans", sans-serif; }
.confirm { display: flex; justify-content: space-between; padding: 0 15px 0 23px; }
.confirm label { display: flex; align-items: center; gap: 6px; height: 22px; }
.confirm input { appearance: none; position: relative; width: 12px; height: 12px; border: 1px solid #555; background: #fff; }
.confirm input:checked::after { content: ""; position: absolute; left: 3px; top: 0; width: 3px; height: 6px; border: solid #555; border-width: 0 1px 1px 0; transform: rotate(40deg); }
.confirm button { width: 67px; height: 24px; border: 1px solid #6f9c52; background: #86b268; color: #fff; font-size: 13px; }

.ime { position: absolute; right: 0; bottom: 3px; box-sizing: border-box; display: flex; align-items: center; gap: 6px; height: 25px; padding-right: 4px; border: 1px solid #b9cbe0; border-right: 0; background: #fcfdff; }
.ime b { width: 16px; color: #1a78c8; font-size: 15px; text-align: center; }
</style>
